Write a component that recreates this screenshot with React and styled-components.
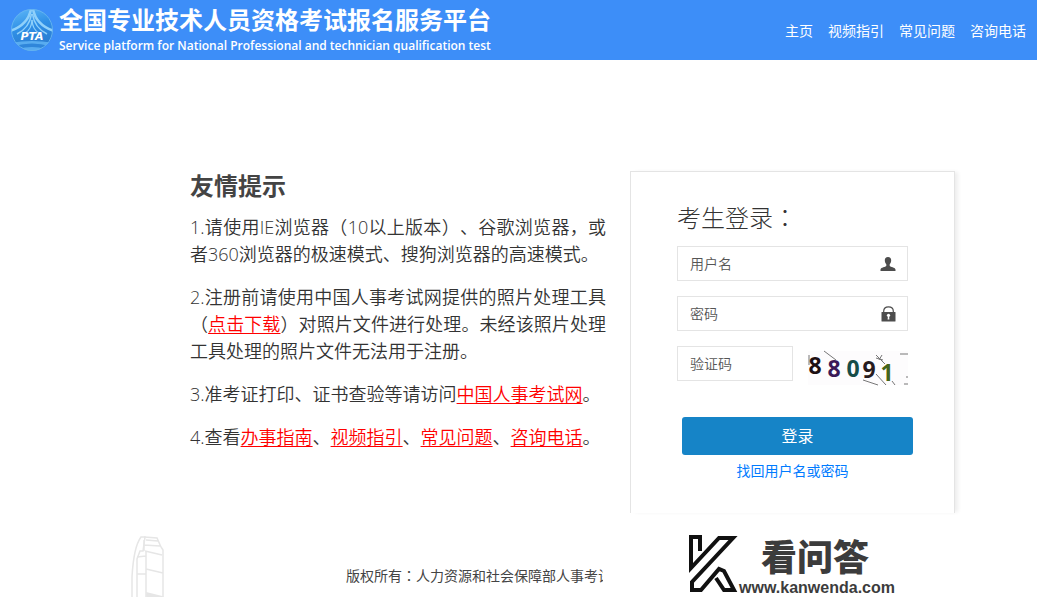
import React from 'react';
import styled, { createGlobalStyle } from 'styled-components';

const GlobalStyle = createGlobalStyle`
  *, *::before, *::after { box-sizing: border-box; }
  body {
    margin: 0;
    background: #fff;
    color: #444;
    font-family: "Open Sans", "Noto Sans CJK SC", sans-serif;
    font-size: 14px;
    line-height: 20px;
    text-spacing-trim: space-all;
  }
`;

const Header = styled.header`
  display: flex;
  align-items: center;
  min-height: 60px;
  padding: 0 11px 0 10px;
  background: #3d8ef8;
  color: #fff;
`;

const Brand = styled.div`
  display: flex;
  align-items: center;
  gap: 5px;
`;

const BrandTitle = styled.h1`
  margin: 0;
  font-size: 24px;
  line-height: 36px;
  font-weight: 700;
  white-space: nowrap;
`;

const BrandSubtitle = styled.p`
  margin: 0;
  padding-bottom: 4px;
  font-size: 12px;
  line-height: 16px;
  font-weight: 600;
  white-space: nowrap;
`;

const Nav = styled.nav`
  display: flex;
  gap: 15px;
  margin-left: auto;
  padding-top: 2px;
`;

const NavLink = styled.a`
  color: #fff;
  text-decoration: none;
  white-space: nowrap;
`;

const Main = styled.main`
  display: grid;
  grid-template-columns: minmax(0, 1fr) 325px;
  gap: 24px;
  padding: 111px 82px 0 190px;
`;

const Tips = styled.section`
  color: #333;
  font-size: 18px;
  line-height: 27px;
  font-weight: 350;
  text-align: justify;
`;

const TipsTitle = styled.h2`
  margin: 0 0 13px;
  color: #444;
  font-size: 24px;
  line-height: 30px;
  font-weight: 700;
`;

const Tip = styled.p`
  margin: 0 0 16px;
`;

const TipLink = styled.a`
  color: #f00;
  text-decoration: underline;
  text-underline-offset: 2px;
`;

const Mid = styled.span`
  font-family: "Noto Sans CJK TC", sans-serif;
`;

const LoginCard = styled.form`
  min-height: 342px;
  padding: 27px 46px 0;
  border: 1px solid #e4e4e4;
  border-bottom: 0;
  box-shadow: 4px 0 4px -1px #eee;
`;

const LoginTitle = styled.h2`
  margin: 0 0 11px;
  color: #333;
  font-size: 24px;
  line-height: 35px;
  font-weight: 300;
`;

const Field = styled.label`
  display: flex;
  align-items: center;
  width: ${(p) => (p.$short ? '116px' : '231px')};
  height: 35px;
  padding: 0 11px 0 12px;
  border: 1px solid #e4e4e4;
`;

const FieldInput = styled.input`
  flex: 1;
  min-width: 0;
  padding: 0;
  border: 0;
  outline: 0;
  background: transparent;
  color: #444;
  font: inherit;
  font-weight: 350;

  &::placeholder { color: #555; opacity: 1; }
`;

const FieldStack = styled.div`
  display: flex;
  flex-direction: column;
  gap: 15px;
`;

const CaptchaRow = styled.div`
  display: flex;
  gap: 15px;
`;

const CaptchaImage = styled.svg`
  display: block;
  flex: none;
  margin-top: 5px;
  overflow: visible;
`;

const Actions = styled.div`
  display: flex;
  flex-direction: column;
  align-items: center;
  gap: 6px;
  margin-top: 32px;
`;

const LoginButton = styled.button`
  width: 231px;
  height: 38px;
  margin-left: 10px;
  border: 0;
  border-radius: 3px;
  background: #1684c7;
  color: #fff;
  font: inherit;
  font-size: 16px;
`;

const RecoverLink = styled.a`
  color: #007bff;
  text-decoration: none;
`;

const Footer = styled.footer`
  display: flex;
  align-items: flex-start;
  padding: 9px 142px 0 130px;
`;

const Building = styled.svg`
  display: block;
  flex: none;
  margin-top: 13px;
`;

const Copyright = styled.p`
  width: 257px;
  margin: 43px 0 0 180px;
  overflow: hidden;
  white-space: nowrap;
`;

const Partner = styled.div`
  display: flex;
  align-items: flex-start;
  margin-left: auto;
`;

const PartnerMark = styled.svg`
  display: block;
  margin-top: 11px;
`;

const PartnerText = styled.div`
  color: #3c3c3c;
  font-weight: 900;
`;

const PartnerName = styled.div`
  padding: 11px 0 3px 22px;
  font-family: "Noto Sans CJK SC", sans-serif;
  font-size: 36px;
  line-height: 44px;
`;

const PartnerUrl = styled.div`
  font-family: "Liberation Sans", sans-serif;
  font-size: 16px;
  line-height: 16px;
  font-weight: 700;
`;

function PtaLogo() {
  return (
    <svg width="44" height="44" viewBox="0 0 44 44" aria-label="PTA">
      <defs>
        <linearGradient id="disc" x1="0" y1="0" x2="0.3" y2="1">
          <stop offset="0" stopColor="#5fb9f8" />
          <stop offset="0.5" stopColor="#2f8fe6" />
          <stop offset="1" stopColor="#2a7cd0" />
        </linearGradient>
        <clipPath id="discEdge"><circle cx="22" cy="22" r="21" /></clipPath>
      </defs>
      <circle cx="22" cy="22" r="21" fill="url(#disc)" />
      <g clipPath="url(#discEdge)">
        <g fill="none" stroke="#8fd0fa">
          <path strokeWidth="2.500" d="M21 1C19 12 12 19 0 23" />
          <path strokeWidth="2.500" d="M23 1C25 12 32 19 44 23" />
          <path strokeWidth="1.500" d="M21.500 6C20 16 15 22 7 26" />
          <path strokeWidth="1.500" d="M22.500 6C24 16 29 22 37 26" />
          <path strokeWidth="1.200" d="M22 12C21.500 19 19 23 15 25" />
          <path strokeWidth="1.200" d="M22 12C22.500 19 25 23 29 25" />
        </g>
        <path d="M0 35Q22 31 44 35V44H0Z" fill="#58acf0" />
        <path d="M4 38Q22 33 40 38L36 41Q22 37 8 41Z" fill="#2f86da" />
      </g>
      <circle cx="22" cy="22" r="20.500" fill="none" stroke="#63b2f2" />
      <text x="22" y="32" textAnchor="middle" fill="#fff" fontFamily="DejaVu Sans, sans-serif" fontSize="11" fontWeight="700" fontStyle="italic">PTA</text>
    </svg>
  );
}

function UserIcon() {
  return (
    <svg width="16" height="16" viewBox="0 0 16 16" fill="#4d4d4d" aria-hidden="true">
      <path d="M8 1C5.800 1 4.800 2.300 4.800 4.300C4.800 6.300 5.600 7.500 6.300 8.200V10C5.500 11 1 11.200 .5 13.500V15H15.500V13.500C15 11.200 10.500 11 9.700 10V8.200C10.400 7.500 11.200 6.300 11.200 4.300C11.200 2.300 10.200 1 8 1Z" />
    </svg>
  );
}

function LockIcon() {
  return (
    <svg width="16" height="16" viewBox="0 0 16 16" aria-hidden="true">
      <path d="M3.700 7V5.200C3.700 2.400 5.500 .9 8.500 .9S13.300 2.400 13.300 5.200V7" fill="none" stroke="#4d4d4d" strokeWidth="1.200" />
      <rect x="1.500" y="6" width="14" height="9.500" rx="0.500" fill="#4d4d4d" />
      <circle cx="8.500" cy="9.300" r="1.600" fill="#fff" />
      <path d="M7.900 10H9.100L9.400 13.500H7.600Z" fill="#fff" />
    </svg>
  );
}

const DIGITS = [
  { char: '8', x: 7, y: 23, color: '#1d1012' },
  { char: '8', x: 26, y: 26, color: '#3b1a58' },
  { char: '0', x: 45, y: 26, color: '#174d48' },
  { char: '9', x: 61, y: 27, color: '#271b1e' },
  { char: '1', x: 79, y: 30, color: '#44651a' },
];

function Captcha() {
  return (
    <CaptchaImage width="100" height="34" viewBox="0 0 100 34" aria-label="验证码图片">
      <rect width="100" height="34" fill="#fdfcfd" />
      <g stroke="#777" fill="none">
        <path d="M1 4V14M16 0L28 9M68 4L77 13M68 7L75 9M71 9L74 4M92 3H100M55 29L70 34M68 23L78 34M84 30L87 34M98 26H100M96 33H100" />
      </g>
      {DIGITS.map((d, i) => (
        <text key={i} x={d.x} y={d.y} fill={d.color} textAnchor="middle" fontFamily="Open Sans, sans-serif" fontSize="23" fontWeight="700">{d.char}</text>
      ))}
    </CaptchaImage>
  );
}

function BuildingDrawing() {
  return (
    <Building width="36" height="62" viewBox="0 0 36 62" fill="none" stroke="#e6e6e6" strokeWidth="1.500" aria-hidden="true">
      <path d="M2 62V42C3 24 5 10 11 2H15L13 16H10L7 24V62" />
      <path d="M14 2L27 3L31 12L33 15V62M16 5L28 6M14 10L30 11M14 5V16M15 16L32 20M16 16V62M7 22L16 21M7 39H16M16 34L33 38" />
      <path d="M17 58L33 62H17Z" fill="#e6e6e6" />
    </Building>
  );
}

const NAV = ['主页', '视频指引', '常见问题', '咨询电话'];
const GUIDES = ['办事指南', '视频指引', '常见问题', '咨询电话'];

export default function App() {
  return (
    <>
      <GlobalStyle />
      <Header>
        <Brand>
          <PtaLogo />
          <div>
            <BrandTitle>全国专业技术人员资格考试报名服务平台</BrandTitle>
            <BrandSubtitle>Service platform for National Professional and technician qualification test</BrandSubtitle>
          </div>
        </Brand>
        <Nav>
          {NAV.map((t) => <NavLink key={t} href="#">{t}</NavLink>)}
        </Nav>
      </Header>
      <Main>
        <Tips>
          <TipsTitle>友情提示</TipsTitle>
          <Tip>1.请使用IE浏览器（10以上版本）、谷歌浏览器，或者360浏览器的极速模式、搜狗浏览器的高速模式。</Tip>
          <Tip>2.注册前请使用中国人事考试网提供的照片处理工具（<TipLink href="#">点击下载</TipLink>）对照片文件进行处理。未经该照片处理工具处理的照片文件无法用于注册。</Tip>
          <Tip>3.准考证打印、证书查验等请访问<TipLink href="#">中国人事考试网</TipLink>。</Tip>
          <Tip>
            4.查看
            {GUIDES.map((t, i) => (
              <React.Fragment key={t}>
                {i > 0 && '、'}
                <TipLink href="#">{t}</TipLink>
              </React.Fragment>
            ))}
            。
          </Tip>
        </Tips>
        <LoginCard onSubmit={(e) => e.preventDefault()}>
          <LoginTitle>考生登录<Mid>：</Mid></LoginTitle>
          <FieldStack>
            <Field>
              <FieldInput type="text" placeholder="用户名" aria-label="用户名" />
              <UserIcon />
            </Field>
            <Field>
              <FieldInput type="password" placeholder="密码" aria-label="密码" />
              <LockIcon />
            </Field>
            <CaptchaRow>
              <Field $short>
                <FieldInput type="text" placeholder="验证码" aria-label="验证码" />
              </Field>
              <Captcha />
            </CaptchaRow>
          </FieldStack>
          <Actions>
            <LoginButton type="submit">登录</LoginButton>
            <RecoverLink href="#">找回用户名或密码</RecoverLink>
          </Actions>
        </LoginCard>
      </Main>
      <Footer>
        <BuildingDrawing />
        <Copyright>版权所有<Mid>：</Mid>人力资源和社会保障部人事考试</Copyright>
        <Partner>
          <PartnerMark width="52" height="62" viewBox="0 0 52 62" aria-hidden="true">
            <g fill="none" stroke="#111" strokeWidth="4" strokeLinejoin="miter">
              <path d="M13 18V4H4V35L32 5H46L5 49V57H14L32 36L37 38L47 57H37L29 45" />
            </g>
          </PartnerMark>
          <PartnerText>
            <PartnerName>看问答</PartnerName>
            <PartnerUrl>www.kanwenda.com</PartnerUrl>
          </PartnerText>
        </Partner>
      </Footer>
    </>
  );
}
